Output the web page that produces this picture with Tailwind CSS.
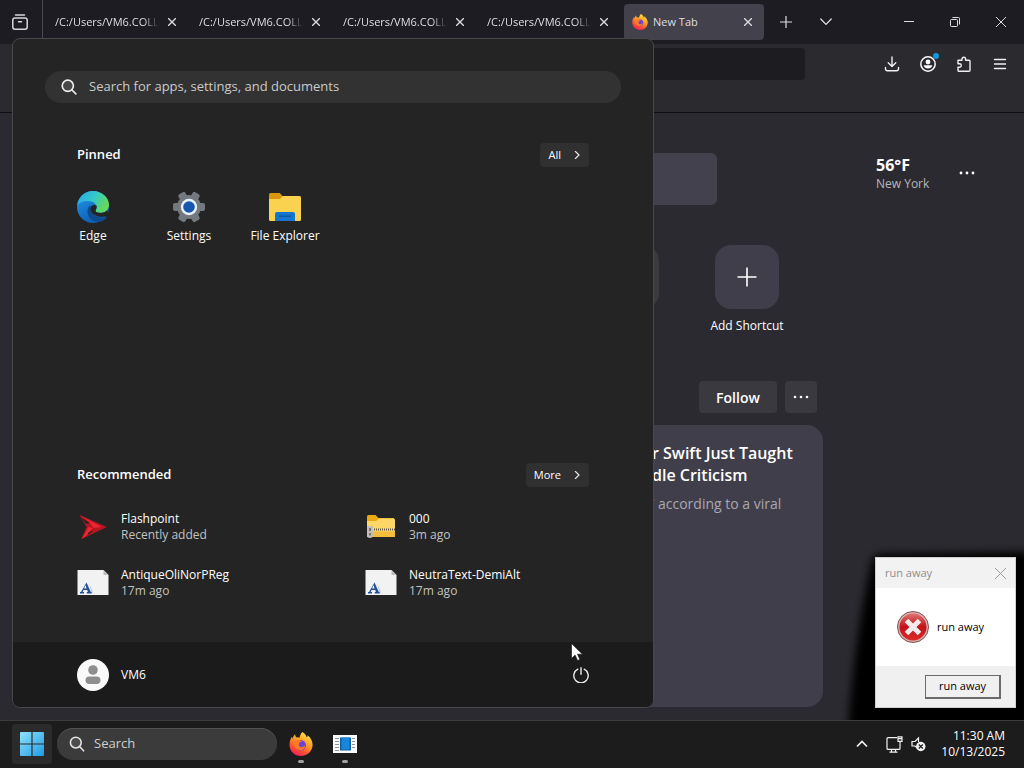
<!DOCTYPE html>
<html lang="en">
<head>
  <meta charset="UTF-8">
  <meta name="viewport" content="width=device-width, initial-scale=1">
  <title>Desktop</title>
  <script src="https://cdn.jsdelivr.net/npm/@tailwindcss/browser@4"></script>
</head>
<body class="relative h-screen overflow-hidden flex flex-col bg-[#2b2a30] text-white font-['Open_Sans','Noto_Sans',sans-serif]">

  <!-- Browser window -->
  <div class="flex-1 min-h-0 flex flex-col">

    <!-- Tab strip -->
    <header class="h-11 shrink-0 flex items-center bg-[#1d1c22] text-[11px] text-[#dddde2]">
      <button aria-label="Firefox View" class="w-[43px] h-full flex items-center justify-center pr-0.5 border-r border-[#4a4950]">
        <svg class="size-4" viewBox="0 0 16 16" fill="none" stroke="#d6d6dc" stroke-width="1.5" stroke-linecap="round">
          <path d="M3.500 1h9"/><rect x=".8" y="4" width="14.4" height="11.2" rx="2.2"/><path d="M6.500 7.800h3"/>
        </svg>
      </button>
      <nav class="flex gap-1 pl-[5px]">
        <div class="w-[140px] h-9 flex items-center justify-between pl-[7px] pr-2">
          <span class="whitespace-nowrap mask-r-from-85%">/C:/Users/VM6.COLL</span>
          <button aria-label="Close tab" class="size-4 flex items-center justify-center"><svg class="size-2" viewBox="0 0 8 8" stroke="#dddde2" stroke-width="1.3"><path d="M0 0l8 8M8 0L0 8"/></svg></button>
        </div>
        <div class="w-[140px] h-9 flex items-center justify-between pl-[7px] pr-2">
          <span class="whitespace-nowrap mask-r-from-85%">/C:/Users/VM6.COLL</span>
          <button aria-label="Close tab" class="size-4 flex items-center justify-center"><svg class="size-2" viewBox="0 0 8 8" stroke="#dddde2" stroke-width="1.3"><path d="M0 0l8 8M8 0L0 8"/></svg></button>
        </div>
        <div class="w-[140px] h-9 flex items-center justify-between pl-[7px] pr-2">
          <span class="whitespace-nowrap mask-r-from-85%">/C:/Users/VM6.COLL</span>
          <button aria-label="Close tab" class="size-4 flex items-center justify-center"><svg class="size-2" viewBox="0 0 8 8" stroke="#dddde2" stroke-width="1.3"><path d="M0 0l8 8M8 0L0 8"/></svg></button>
        </div>
        <div class="w-[140px] h-9 flex items-center justify-between pl-[7px] pr-2">
          <span class="whitespace-nowrap mask-r-from-85%">/C:/Users/VM6.COLL</span>
          <button aria-label="Close tab" class="size-4 flex items-center justify-center"><svg class="size-2" viewBox="0 0 8 8" stroke="#dddde2" stroke-width="1.3"><path d="M0 0l8 8M8 0L0 8"/></svg></button>
        </div>
        <div class="w-[140px] h-9 flex items-center rounded bg-[#43424c] px-2 gap-[5px]">
          <svg class="size-4" viewBox="0 0 24 24"><use href="#firefox"/></svg>
          <span class="flex-1">New Tab</span>
          <button aria-label="Close tab" class="size-4 flex items-center justify-center"><svg class="size-2" viewBox="0 0 8 8" stroke="#dddde2" stroke-width="1.3"><path d="M0 0l8 8M8 0L0 8"/></svg></button>
        </div>
      </nav>
      <button aria-label="New tab" class="w-11 h-full flex items-center justify-center"><svg class="size-3" viewBox="0 0 12 12" stroke="#dddde2" stroke-width="1.2"><path d="M6 0v12M0 6h12"/></svg></button>
      <button aria-label="List all tabs" class="w-9 h-full flex items-center justify-center"><svg class="w-3 h-2" viewBox="0 0 12 8" fill="none" stroke="#dddde2" stroke-width="1.3" stroke-linecap="round"><path d="M.8 1L6 6.400 11.200 1"/></svg></button>
      <div class="ml-auto h-full flex">
        <button aria-label="Minimize" class="w-[46px] flex items-center justify-center"><svg class="size-[10px]" viewBox="0 0 10 10" stroke="#dddde2"><path d="M0 4.500h10"/></svg></button>
        <button aria-label="Restore" class="w-[46px] flex items-center justify-center"><svg class="size-[10px]" viewBox="0 0 10 10" fill="none" stroke="#dddde2"><rect x=".5" y="2.5" width="7" height="7" rx="1"/><path d="M2.500 .5h6a1 1 0 0 1 1 1v6"/></svg></button>
        <button aria-label="Close" class="w-[46px] flex items-center justify-center"><svg class="size-[10px]" viewBox="0 0 10 10" stroke="#dddde2"><path d="M0 0l10 10M10 0L0 10"/></svg></button>
      </div>
    </header>

    <!-- Toolbar -->
    <div class="h-[69px] shrink-0 border-b border-[#0f0e12] bg-[#2b2a2f]">
      <div class="h-10 flex items-center pr-1.5">
        <input aria-label="Address" class="flex-1 h-8 ml-48 mr-[69px] rounded bg-[#1d1c21]">
        <button aria-label="Downloads" class="w-9 flex justify-center"><svg class="size-4" viewBox="0 0 16 16" fill="none" stroke="#f0f0f4" stroke-width="1.4" stroke-linecap="round" stroke-linejoin="round"><path d="M8 1v9.400M4.200 6.800L8 10.600l3.800-3.800M1.500 11.500v1.300a2 2 0 0 0 2 2h9a2 2 0 0 0 2-2v-1.300"/></svg></button>
        <button aria-label="Account" class="w-9 flex justify-center relative">
          <svg class="size-4" viewBox="0 0 16 16"><circle cx="8" cy="8" r="7.2" fill="none" stroke="#fbfbfe" stroke-width="1.5"/><circle cx="8" cy="6" r="2.4" fill="#fbfbfe"/><path d="M3.600 9.300h8.800a4.600 4.600 0 0 1-8.800 0z" fill="#fbfbfe"/></svg>
          <span class="absolute -top-[3px] right-[7px] size-1.5 rounded-full bg-[#1296dc]"></span>
        </button>
        <button aria-label="Extensions" class="w-9 flex justify-center"><svg class="size-4" viewBox="0 0 16 16" fill="none" stroke="#f0f0f4" stroke-width="1.4" stroke-linejoin="round"><path d="M2 4.300h4V3a1.800 1.800 0 0 1 3.600 0v1.300H13a1 1 0 0 1 1 1v8.900a1 1 0 0 1-1 1H3a1 1 0 0 1-1-1v-3h1.600a1.700 1.700 0 0 0 0-3.400H2z"/></svg></button>
        <button aria-label="Menu" class="w-9 flex justify-center"><svg class="size-4" viewBox="0 0 16 16" stroke="#f0f0f4" stroke-width="1.4" stroke-linecap="round"><path d="M2.500 3.500h11M2.500 8h11M2.500 12.500h11"/></svg></button>
      </div>
    </div>

    <!-- New tab page -->
    <main class="flex-1 min-h-0 flex flex-col pt-10 pb-[13px]">
      <div class="flex items-center">
        <div class="flex-1 pl-[41px]"></div>
        <input aria-label="Search the web" class="w-[410px] h-13 rounded-md bg-[#43414d]">
        <div class="flex-1 flex items-center justify-end pr-[41px]">
          <div class="w-[75px] -mt-2.5">
            <p class="text-[16px] leading-5 font-bold">56°F</p>
            <p class="text-[12px] leading-[18px] text-[#b6b6bc]">New York</p>
          </div>
          <button aria-label="Weather options" class="w-8 h-8 -mt-3 flex items-center justify-center"><svg class="w-4 h-1" viewBox="0 0 16 4" fill="#fff"><circle cx="2" cy="2" r="1.4"/><circle cx="8" cy="2" r="1.4"/><circle cx="14" cy="2" r="1.4"/></svg></button>
        </div>
      </div>

      <div class="flex-1 flex flex-col w-[622px] mx-auto pt-10">
        <div class="flex justify-end pr-4">
          <div class="w-[120px] flex justify-center"><div class="size-16 rounded-2xl bg-[#3b3b3d]"></div></div>
          <button class="w-[120px] flex flex-col items-center gap-2 text-[12px] leading-[18px]">
            <span class="size-16 rounded-2xl bg-[#403e4a] flex items-center justify-center"><svg class="size-5" viewBox="0 0 20 20" stroke="#fff" stroke-width="1.6"><path d="M10 .5v19M.5 10h19"/></svg></span>
            Add Shortcut
          </button>
        </div>
        <div class="flex justify-end gap-2 pr-1.5 mt-[46px]">
          <button class="w-[78px] h-8 rounded bg-[#3a3940] text-[14px] font-semibold">Follow</button>
          <button aria-label="More options" class="size-8 rounded bg-[#3a3940] flex items-center justify-center"><svg class="w-4 h-1" viewBox="0 0 16 4" fill="#fff"><circle cx="2" cy="2" r="1.3"/><circle cx="8" cy="2" r="1.3"/><circle cx="14" cy="2" r="1.3"/></svg></button>
        </div>
        <article class="flex-1 mt-3 rounded-2xl bg-[#403e4a] pt-[17px]">
          <div class="ml-auto w-[171px]">
            <h2 class="text-[16px] leading-[22px] font-semibold whitespace-nowrap">r Swift Just Taught<br>dle Criticism</h2>
            <p class="mt-2 text-[14px] leading-5 text-[#a9a8b1]">’ according to a viral</p>
          </div>
        </article>
      </div>
    </main>
  </div>

  <!-- Taskbar -->
  <footer class="h-12 shrink-0 flex items-center inset-shadow-[0_1px_#3c3b3f] bg-[#1c1c1c] pl-3">
    <button aria-label="Start" class="w-10 h-10 rounded bg-[#2b2b2b] flex items-center justify-center">
      <svg class="size-6" viewBox="0 0 24 24"><defs><linearGradient id="win" x2="1" y2="1" gradientUnits="objectBoundingBox"><stop stop-color="#8fe3fb"/><stop offset="1" stop-color="#1f9be6"/></linearGradient></defs><path fill="url(#win)" d="M0 1a1 1 0 0 1 1-1h10.400v11.400H0zM12.600 0H23a1 1 0 0 1 1 1v10.400H12.600zM0 12.600h11.400V24H1a1 1 0 0 1-1-1zM12.600 12.600H24V23a1 1 0 0 1-1 1H12.600z"/></svg>
    </button>
    <label class="ml-[5px] w-[220px] h-8 rounded-full bg-[#3b3b3b] inset-shadow-[0_1px_#525252] flex items-center gap-[9px] pl-3">
      <svg class="size-4" viewBox="0 0 16 16" fill="#4c4c4c" stroke="#e4e4e4" stroke-width="1.6" stroke-linecap="round"><circle cx="6.8" cy="6.6" r="5.4"/><path d="M10.800 10.800l3.800 4"/></svg>
      <input type="text" placeholder="Search" aria-label="Search" class="w-36 bg-transparent outline-none text-[13px] placeholder:text-[#cfcfcf]">
    </label>
    <button aria-label="Firefox" class="ml-1 w-10 h-10 flex flex-col items-center pt-2">
      <svg class="size-6" viewBox="0 0 24 24">
        <defs>
          <linearGradient id="flame" x1=".8" y1="0" x2=".3" y2="1"><stop stop-color="#ffe84a"/><stop offset=".45" stop-color="#ff9a22"/><stop offset=".8" stop-color="#ff4436"/><stop offset="1" stop-color="#e81f62"/></linearGradient>
          <g id="firefox">
            <path fill="url(#flame)" d="M13.200 0c3 1.600 4.300 3.800 4.600 5.600.7-.7.9-1.500.8-2.400 3.200 2.600 5 6 5 9.600C23.600 19 18.500 24 12 24S.5 19 .5 12.900c0-3 .9-6 2.500-8.300 0 .9.2 1.600.5 2.100.5-1.900 1.300-3.300 2.600-4.500.1 1.500.6 2.500 1.400 3.200 1.100-.2 2.200 0 3 .4C11 3.800 11.700 1.600 13.200 0z"/>
            <circle cx="11.800" cy="13.300" r="5.200" fill="#7b3fd0"/>
            <path fill="#ff7a26" d="M4.500 10.500c1.800-2.700 4.500-3.200 7-2 .9.400 1.500 1 1.500 1.600 0 .9-2.300.8-3 1.900-.8 1.300.3 3.200 2.300 3.200 1.700 0 2.600-1 4-.8-.6 2.400-2.600 3.600-5 3.600-3.900 0-6.800-3-6.800-7.500z"/>
            <circle cx="12.500" cy="12" r="2.300" fill="#6148cf"/>
          </g>
        </defs>
        <use href="#firefox"/>
      </svg>
      <span class="mt-1 w-1.5 h-[3px] rounded-full bg-[#a0a0a0]"></span>
    </button>
    <button aria-label="Message window" class="ml-1 w-10 h-10 flex flex-col items-center pt-2">
      <svg class="size-6" viewBox="0 0 24 24"><path fill="#fafafa" d="M0 3h24v18H0z"/><path stroke="#8c959c" d="M2 6.500h4M2 9.500h4M2 12.500h4M2 15.500h4M2 18.500h4M19 6.500h3M19 9.500h3M19 12.500h3M19 15.500h3"/><path fill="#0f5fa5" d="M7 5.500h11v13H7z"/><path fill="#1b86d8" d="M8.500 5.500h8v12h-8z"/></svg>
      <span class="mt-1 w-1.5 h-[3px] rounded-full bg-[#a0a0a0]"></span>
    </button>
    <div class="ml-auto flex items-center pr-[19px]">
      <button aria-label="Show hidden icons" class="w-8 h-8 flex items-center justify-center"><svg class="w-3 h-2" viewBox="0 0 12 8" fill="none" stroke="#f2f2f2" stroke-width="1.7"><path d="M1 6.500L6 1.500l5 5"/></svg></button>
      <button aria-label="Network and volume" class="h-8 flex items-center gap-2 pl-2">
        <svg class="w-[17px] h-[17px]" viewBox="0 0 17 17" fill="none" stroke="#f2f2f2" stroke-width="1.2"><path d="M11 1.600H2a1 1 0 0 0-1 1v9.800a1 1 0 0 0 1 1h11a1 1 0 0 0 1-1V7.500M5.500 13.500v2.500M9.500 13.500v2.500M3.500 16.200h8M12 .8h4v4.500h-4zM14 5.300v3M12 2.600h4"/></svg>
        <svg class="w-[15px] h-4" viewBox="0 0 15 16"><path fill="none" stroke="#f2f2f2" stroke-width="1.2" d="M7 12.500L4 10H1V5.500h3L7.500 2v4"/><circle cx="9.800" cy="10.500" r="4.700" fill="#f2f2f2"/><path stroke="#1c1c1c" stroke-width="1.2" d="M7.800 8.500l4 4M11.800 8.500l-4 4"/></svg>
      </button>
      <time class="w-[79px] text-right text-[12px] leading-4 whitespace-nowrap">11:30 AM<br>10/13/2025</time>
    </div>
  </footer>

  <!-- Start menu -->
  <section aria-label="Start menu" class="absolute left-3 top-[38px] bottom-[60px] w-[642px] flex flex-col rounded-lg border border-[#48484a] bg-[#242424] overflow-hidden">
    <label class="mx-8 mt-8 h-8 shrink-0 rounded-full bg-[#323232] flex items-center gap-3 pl-4">
      <svg class="size-4" viewBox="0 0 16 16" fill="#484848" stroke="#ececec" stroke-width="1.7" stroke-linecap="round"><circle cx="6.800" cy="6.800" r="5.600"/><path d="M11 11l3.800 3.800"/></svg>
      <input type="text" placeholder="Search for apps, settings, and documents" aria-label="Search for apps, settings, and documents" class="flex-1 bg-transparent outline-none text-[13px] placeholder:text-[#cbcbcb]">
    </label>

    <div class="mt-10 px-16 flex items-center justify-between">
      <h2 class="text-[13px] font-semibold">Pinned</h2>
      <button class="h-6 rounded bg-[#303030] px-2 flex items-center gap-3 text-[11px]">All <svg class="w-2 h-2" viewBox="0 0 8 8" fill="none" stroke="#e8e8e8" stroke-width="1.2"><path d="M2 0l4 4-4 4"/></svg></button>
    </div>

    <div class="mt-6 px-8 flex text-[12px] leading-[18px]">
      <a href="#" class="w-24 flex flex-col items-center gap-1">
        <svg class="size-8" viewBox="0 0 32 32">
          <defs>
            <linearGradient id="edgeTop" x1="0" y1=".2" x2="1" y2=".6"><stop stop-color="#2ba9e6"/><stop offset=".5" stop-color="#34c9c9"/><stop offset="1" stop-color="#6bdc4c"/></linearGradient>
            <linearGradient id="edgeLeft" x1="0" y1="0" x2=".6" y2="1"><stop stop-color="#249be5"/><stop offset="1" stop-color="#0c59b5"/></linearGradient>
          </defs>
          <circle cx="16" cy="16" r="16" fill="url(#edgeLeft)"/>
          <path fill="url(#edgeTop)" d="M.3 14C1.500 5.500 8 0 16 0c9 0 16 6.500 16 13.800 0 4.700-3.700 8-8.200 8-3.200 0-5.300-.9-5.300-2 0-.8 1.200-1.300 1.200-3.500 0-3.300-3.700-6.300-8.700-6.300-4.700 0-8.500 1.500-10.700 4z"/>
          <path fill="#114a8b" d="M13.300 14.300c-3.500 2.600-4 8.700-.3 12.900 3.600 4.100 9.800 4.600 14.500 1.700 1.200-.8 2.300-2 3-3-9 3.500-17.200-3-17.200-11.600z"/>
          <path fill="#242424" d="M19.600 15c.3 2.500-1.100 3.700-1.100 4.700 0 1.500 2.500 2.200 5.300 2.200 2.500 0 4.600-.9 6-2.200 1 .3 1.600 2.600.7 4.700-6.500 3.500-16.800 0-17-7 0-3.700 5-4.400 6.100-2.400z"/>
        </svg>
        Edge
      </a>
      <a href="#" class="w-24 flex flex-col items-center gap-1">
        <svg class="size-8" viewBox="0 0 32 32">
          <g fill="#73797f"><rect x="12" y="0" width="8" height="32" rx="2" transform="rotate(30 16 16)"/><rect x="12" y="0" width="8" height="32" rx="2" transform="rotate(90 16 16)"/><rect x="12" y="0" width="8" height="32" rx="2" transform="rotate(150 16 16)"/><circle cx="16" cy="16" r="12"/></g>
          <circle cx="16" cy="16" r="8.200" fill="#e7f2fc"/><circle cx="16" cy="16" r="5.800" fill="#1857ad"/>
        </svg>
        Settings
      </a>
      <a href="#" class="w-24 flex flex-col items-center gap-1 whitespace-nowrap">
        <svg class="size-8" viewBox="0 0 32 32">
          <path fill="#d9960f" d="M0 3.500A1.500 1.500 0 0 1 1.500 2h9.300l2.700 3H31v6H0z"/><path fill="#fbd150" d="M0 8h11l3-3h16.500A1.500 1.500 0 0 1 32 6.500v22a1.500 1.500 0 0 1-1.500 1.500h-29A1.500 1.500 0 0 1 0 28.500z"/><path fill="#1574cf" d="M6 30v-7a2 2 0 0 1 2-2h16a2 2 0 0 1 2 2v7z"/><path fill="#0d579f" d="M10 24.500h12v1.500H10z"/>
        </svg>
        File Explorer
      </a>
    </div>

    <div class="mt-auto px-16 flex items-center justify-between">
      <h2 class="text-[13px] font-semibold">Recommended</h2>
      <button class="h-6 rounded bg-[#303030] px-2 flex items-center gap-3 text-[11px]">More <svg class="w-2 h-2" viewBox="0 0 8 8" fill="none" stroke="#e8e8e8" stroke-width="1.2"><path d="M2 0l4 4-4 4"/></svg></button>
    </div>

    <div class="mt-3 mb-[31px] pl-16 grid grid-cols-2 text-[12px] leading-4">
      <a href="#" class="h-14 flex items-center gap-3">
        <svg class="size-8" viewBox="0 0 32 32"><path fill="#b51620" d="M2.500 4L30 16 4.500 28l5-12z"/><path fill="#ed2632" d="M2.500 4l22 12-8 1-4-6zM4.500 28l7-12 4 1-5 7z"/><path fill="#242424" d="M4.500 6.500l8 5.500-3.500 1zM12 21l5-1.500-7 5z"/></svg>
        <p>Flashpoint<br><span class="text-[#c2c2c2]">Recently added</span></p>
      </a>
      <a href="#" class="h-14 flex items-center gap-3">
        <svg class="size-8" viewBox="0 0 32 32"><path fill="#eaa910" d="M2 5.500A1.500 1.500 0 0 1 3.500 4h7l3 3H29v5H2z"/><path fill="#fcd767" d="M2 10h9l3-2.500h14.500A1.500 1.500 0 0 1 30 9v17H2z"/><path fill="#f1bd3a" d="M2 20.500h28V26H2z"/><path stroke="#5f5744" stroke-width="2" stroke-dasharray="1 1" d="M9 18.500h21"/><path fill="#c3bdb5" d="M2 15h6v9a3 3 0 0 1-6 0z"/><path fill="#7d7169" d="M4 17h2v3H4zM4 22h2v2.500H4z"/></svg>
        <p>000<br><span class="text-[#c2c2c2]">3m ago</span></p>
      </a>
      <a href="#" class="h-14 flex items-center gap-3">
        <svg class="size-8" viewBox="0 0 32 32"><path fill="#f2f2f3" d="M.5 3h26l5 5v20H.5z"/><path fill="#b9bcc1" d="M26.500 3l5 5h-5z"/><path fill="#244f9f" d="M9.500 15.500l4.300 9.500h1v1.500h-5V25h1.200l-.8-2H6.500l-.8 2H7v1.500H3V25h1zM8.400 18l-1.300 3.500h2.500z"/><path fill="#a9c2e6" d="M12 16.500l4 9h-1.300z"/></svg>
        <p>AntiqueOliNorPReg<br><span class="text-[#c2c2c2]">17m ago</span></p>
      </a>
      <a href="#" class="h-14 flex items-center gap-3">
        <svg class="size-8" viewBox="0 0 32 32"><path fill="#f2f2f3" d="M.5 3h26l5 5v20H.5z"/><path fill="#b9bcc1" d="M26.500 3l5 5h-5z"/><path fill="#244f9f" d="M9.500 15.500l4.300 9.500h1v1.500h-5V25h1.200l-.8-2H6.500l-.8 2H7v1.500H3V25h1zM8.400 18l-1.300 3.500h2.500z"/><path fill="#a9c2e6" d="M12 16.500l4 9h-1.300z"/></svg>
        <p>NeutraText-DemiAlt<br><span class="text-[#c2c2c2]">17m ago</span></p>
      </a>
    </div>

    <div class="h-[65px] shrink-0 px-16 flex items-center justify-between bg-[#1b1b1b]">
      <button class="flex items-center gap-3 text-[12px]">
        <svg class="size-8" viewBox="0 0 32 32"><circle cx="16" cy="16" r="16" fill="#fafafa"/><circle cx="16" cy="11" r="4.800" fill="#8f8f8f"/><rect x="8.500" y="17.500" width="15" height="7.500" rx="3.700" fill="#8f8f8f"/></svg>
        VM6
      </button>
      <button aria-label="Power" class="size-4"><svg class="size-4" viewBox="0 0 16 16" fill="none" stroke="#ececec" stroke-width="1.4" stroke-linecap="round"><path d="M8 .8v6.400M4.800 2.200a7.200 7.200 0 1 0 6.400 0"/></svg></button>
    </div>
  </section>

  <!-- Message box with its smeared shadow -->
  <svg class="absolute right-0 bottom-12 w-[184px] h-[180px]" viewBox="0 0 184 180"><defs><filter id="soft"><feGaussianBlur stdDeviation="4"/></filter></defs><path fill="#000" filter="url(#soft)" d="M32 20Q34 14 42 14L190 12V190H8Q14 100 32 20z"/></svg>
  <section role="dialog" aria-label="run away" class="absolute right-2 bottom-[60px] w-[141px] flex flex-col border border-[#d0d0d0] bg-white text-[11px] text-black">
    <div class="h-[30px] flex items-center justify-between pl-[9px] pr-[9px] bg-[#f2f2f2] text-[#8e8e8e]">
      <span>run away</span>
      <button aria-label="Close dialog"><svg class="size-[11px]" viewBox="0 0 11 11" stroke="#9c9c9c"><path d="M0 0l11 11M11 0L0 11"/></svg></button>
    </div>
    <div class="h-[78px] flex items-center gap-2 pl-[21px]">
      <svg class="size-8" viewBox="0 0 32 32"><defs><linearGradient id="err" x2="0" y2="1"><stop stop-color="#df7472"/><stop offset=".5" stop-color="#c31219"/><stop offset="1" stop-color="#dc2c26"/></linearGradient></defs><circle cx="16" cy="16" r="15.500" fill="#d5b3b1"/><circle cx="16" cy="16" r="15.500" fill="none" stroke="#86504f"/><circle cx="16" cy="16" r="13.500" fill="url(#err)"/><path stroke="#f3ebeb" stroke-width="5" d="M9.500 9.500l13 13M22.500 9.500l-13 13"/></svg>
      <span>run away</span>
    </div>
    <div class="h-[41px] flex items-center justify-end pr-[14px] bg-[#f0f0f0]">
      <button class="w-[76px] h-6 border border-r-2 border-b-2 border-[#6b6b6b] bg-[#f0f0f0]">run away</button>
    </div>
  </section>

  <!-- Mouse pointer -->
  <svg class="absolute left-[571px] top-[643px] w-3 h-[18px]" viewBox="0 0 12 18"><path fill="#fff" stroke="#111" stroke-width=".6" d="M.5.500v15l3.600-3.400 2.500 5.400 2.300-1-2.400-5.300h5z"/></svg>

</body>
</html>
